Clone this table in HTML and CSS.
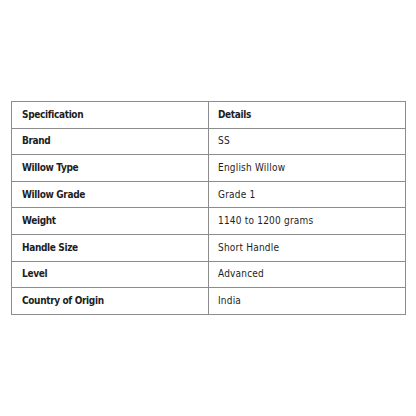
FILE: index.html
```html
<!DOCTYPE html>
<html>
<head>
<meta charset="utf-8">
<link rel="stylesheet" href="styles.css">
</head>
<body>
<div class="page">
  <table class="spec">
    <tr><th class="key">Specification</th><th class="val">Details</th></tr>
    <tr><td class="key">Brand</td><td class="val">SS</td></tr>
    <tr><td class="key">Willow Type</td><td class="val">English Willow</td></tr>
    <tr><td class="key">Willow Grade</td><td class="val">Grade 1</td></tr>
    <tr><td class="key">Weight</td><td class="val">1140 to 1200 grams</td></tr>
    <tr><td class="key">Handle Size</td><td class="val">Short Handle</td></tr>
    <tr><td class="key">Level</td><td class="val">Advanced</td></tr>
    <tr><td class="key">Country of Origin</td><td class="val">India</td></tr>
  </table>
  <span class="dot"></span>
</div>
</body>
</html>
```

FILE: styles.css
```css
html, body {
  margin: 0;
  padding: 0;
  background: #ffffff;
}
.page {
  position: relative;
  padding: 101px 0 0 11px;
  font-family: "DejaVu Sans Condensed", "DejaVu Sans", sans-serif;
  color: #1e1e1e;
}
.spec {
  border-collapse: collapse;
  width: 395px;
  table-layout: fixed;
}
.spec th, .spec td {
  border: 1px solid #8c8c8c;
  height: 25.6px;
  padding: 0 0 0 10px;
  text-align: left;
  vertical-align: middle;
  font-size: 10px;
  line-height: 12px;
}
.spec .key {
  width: 186px;
  font-weight: bold;
  letter-spacing: -0.35px;
}
.spec .val {
  padding-left: 9px;
}
.spec th.val {
  font-weight: bold;
  letter-spacing: -0.35px;
}
.spec td.val {
  font-weight: normal;
  letter-spacing: 0.2px;
}
.dot {
  position: absolute;
  left: 8px;
  top: 318px;
  width: 1px;
  height: 1px;
  background: #cfcfcf;
}
```
